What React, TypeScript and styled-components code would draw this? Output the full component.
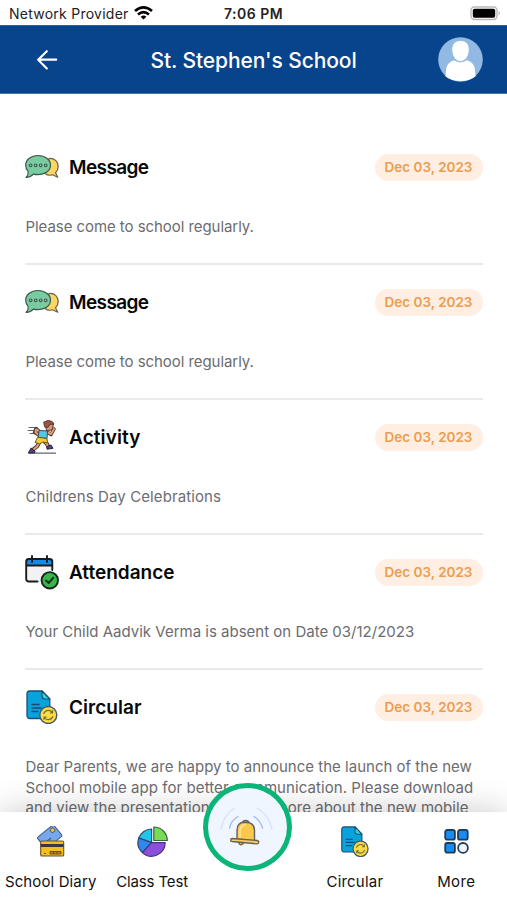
import React from 'react';
import styled, { createGlobalStyle } from 'styled-components';

const GlobalStyle = createGlobalStyle`
  * { box-sizing: border-box; }
  body { margin: 0; background: #fff; font-family: Inter, 'Open Sans', sans-serif; }
  svg { display: block; flex: none; }
`;

const Screen = styled.div`
  width: 507px;
  height: 900px;
  display: flex;
  flex-direction: column;
  overflow: hidden;
  background: #fff;
`;

const StatusBar = styled.div`
  height: 25px;
  flex: none;
  display: grid;
  grid-template-columns: 1fr auto 1fr;
  align-items: center;
  padding: 1px 6px 0 9px;
  font-size: 14px;
  color: #222;
`;

const Carrier = styled.div`
  display: flex;
  align-items: center;
  gap: 5px;
  letter-spacing: 0.25px;
  white-space: nowrap;
`;

const Clock = styled.div`
  font-weight: 600;
  letter-spacing: 0.5px;
  margin-left: -3px;
`;

const BatterySlot = styled.div`
  display: flex;
  justify-content: flex-end;
`;

const Header = styled.header`
  height: 69px;
  flex: none;
  display: grid;
  grid-template-columns: 94px 1fr 94px;
  align-items: center;
  justify-items: center;
  background: #08448c;
  border-top: 1px solid #2d609d;
  border-bottom: 1px solid #4773a9;
`;

const SchoolName = styled.h1`
  margin: 2px 0 0;
  color: #fff;
  font-size: 21px;
  font-weight: 500;
  letter-spacing: -0.1px;
  white-space: nowrap;
`;

const Feed = styled.main`
  flex: 1;
  min-height: 0;
  overflow: hidden;
  padding: 36px 24.5px 0 25px;
`;

const Notice = styled.article`
  height: 135px;
  padding-top: 20px;
  border-bottom: 2px solid #e9e9ea;

  &:last-child {
    border-bottom: 0;
  }
`;

const NoticeHead = styled.div`
  height: 34px;
  display: flex;
  align-items: center;
`;

const NoticeTitle = styled.h2<{ $spacing: number }>`
  margin: 0 auto 0 10px;
  font-size: 19px;
  font-weight: 600;
  letter-spacing: ${(p) => p.$spacing}px;
  color: #080808;
`;

const DatePill = styled.time`
  width: 108px;
  height: 27px;
  border-radius: 14px;
  display: flex;
  align-items: center;
  justify-content: center;
  background: #ffeee1;
  color: #eb9d50;
  font-size: 13.5px;
  font-weight: 600;
  letter-spacing: 0;
  white-space: nowrap;
`;

const NoticeBody = styled.div`
  margin: 33px 0 0 0.5px;
  font-size: 15px;
  line-height: 20.7px;
  color: #6c6c70;
  white-space: nowrap;
`;

const BodyLine = styled.div<{ $spacing: number }>`
  letter-spacing: ${(p) => p.$spacing}px;
`;

const TabBar = styled.nav`
  position: relative;
  z-index: 1;
  height: 88px;
  flex: none;
  display: grid;
  grid-template-columns: repeat(5, 1fr);
  background: #fff;
  box-shadow: 0 0 34px rgba(0, 0, 0, 0.22);
`;

const Tab = styled.div`
  display: flex;
  flex-direction: column;
  align-items: center;
  padding-top: 14px;
`;

const TabLabel = styled.span<{ $spacing: number }>`
  margin-top: 15px;
  font-size: 15px;
  line-height: 20px;
  letter-spacing: ${(p) => p.$spacing}px;
  color: #111;
  white-space: nowrap;
`;

const BellButton = styled.div`
  position: absolute;
  left: 203px;
  top: -29px;
  width: 89px;
  height: 88px;
  border: 5px solid #0cb577;
  border-radius: 50%;
  background: #f0f6ff;
  display: flex;
  align-items: center;
  justify-content: center;
  padding-right: 3px;
`;

const WifiIcon = () => (
  <svg width="19" height="14" viewBox="0 0 19 14" fill="none" stroke="#000" strokeWidth="2.7">
    <path d="M1 5 Q9.5 -2.2 18 5" />
    <path d="M4 8.5 Q9.5 3.9 15 8.5" />
    <path d="M9.5 13.6 L6.6 10.7 Q9.5 8.5 12.4 10.7Z" fill="#000" stroke="none" />
  </svg>
);

const BatteryIcon = () => (
  <svg width="31" height="15" viewBox="0 0 31 15">
    <rect x="1" y="1" width="26" height="12.5" rx="3.5" fill="#fff" stroke="#b9b9b9" strokeWidth="1.4" />
    <rect x="2.8" y="2.8" width="22.4" height="9" rx="1.8" fill="#000" />
    <path d="M28.6 5 Q31 7.2 28.6 9.4Z" fill="#aaa" />
  </svg>
);

const BackIcon = () => (
  <svg width="22" height="22" viewBox="0 0 22 22" fill="none" stroke="#fff" strokeWidth="2.2" strokeLinecap="round" strokeLinejoin="round">
    <path d="M20.200 10.700H2.200M10.800 2.200 2.200 10.700l8.600 8.700" />
  </svg>
);

const Avatar = () => (
  <svg width="45" height="45" viewBox="0 0 45 45">
    <circle cx="22.500" cy="22.500" r="22.300" fill="#91b9e2" />
    <path d="M7.500 39.500 L8.300 31 Q9.500 25.500 16 23.300 Q22.500 27.500 29 23.300 Q35.500 25.500 36.700 31 L37.500 39.500 Q31 44 22.500 44 Q14 44 7.500 39.500Z" fill="#fff" />
    <path d="M22.500 3.500 C29 3.500 31.500 8 31.200 13.500 C30.800 20 27 24.600 22.500 24.600 C18 24.600 14.200 20 13.800 13.500 C13.500 8 16 3.500 22.500 3.500Z" fill="#fff" stroke="#91b9e2" strokeWidth="1" />
  </svg>
);

const MessageIcon = () => (
  <svg width="34" height="34" viewBox="0 0 34 34" stroke="#3f5850" strokeWidth="1.200" strokeLinejoin="round">
    <path d="M24 8.500 C30 8 33.200 12 33.200 16.500 C33.200 19 32 21.300 30.500 22.700 L32.800 27.200 L27.500 24.800 C25 25.600 22 25 20 23.500Z" fill="#fdd565" stroke="#6b5f43" />
    <path d="M13 5.500 C20 5.500 25.500 9.700 25.500 15.300 C25.500 21 20 24.600 13 24.600 Q10.500 24.600 8.300 24.100 C6.500 26.300 4 27.200 1 27.500 Q3.600 25 3.200 21.600 C1.600 20 .7 18 .7 15.300 C.7 9.700 6 5.500 13 5.500Z" fill="#79cca0" />
    <g fill="#b5e2ca" strokeWidth="1.200">
      <circle cx="5.700" cy="15.300" r="1.300" /><circle cx="10.700" cy="15.300" r="1.300" />
      <circle cx="15.700" cy="15.300" r="1.300" /><circle cx="20.700" cy="15.300" r="1.300" />
    </g>
  </svg>
);

const ActivityIcon = () => (
  <svg width="34" height="34" viewBox="0 0 34 34" strokeLinecap="round" strokeLinejoin="round">
    <path d="M4 7.500H12M3 10.500H11M5 13.500H11M4 33.200H30.500" stroke="#65666a" strokeWidth="1.200" />
    <path d="M14 23 L12 26.500 L7.500 30" fill="none" stroke="#493333" strokeWidth="4" />
    <path d="M14 23 L12 26.500 L8 30" fill="none" stroke="#d9a17e" strokeWidth="2.300" />
    <path d="M20 22 L22 24 L23.500 27" fill="none" stroke="#493333" strokeWidth="4" />
    <path d="M20 22 L22 24 L23 27" fill="none" stroke="#d9a17e" strokeWidth="2.300" />
    <path d="M6 28.500 L10 31 L9.500 33 H3.500 Q4 31 6 28.500Z M22 26.500 L26 25 L28 28.300 L22.500 29.200Z" fill="#51418e" stroke="#2c263b" />
    <path d="M14 11 L11 8.500 L9.500 12.500 L14 15 M22 12 L26 14.500 L29 9" fill="none" stroke="#53372f" strokeWidth="3.500" />
    <path d="M14 11 L11 9.500 L10.500 12.500 L14 15 M22 12 L26 14 L29 9" fill="none" stroke="#dba27b" strokeWidth="2" />
    <path d="M14.500 10.500 L22.500 11 L22 18.500 L13.500 17.500Z" fill="#54c8df" stroke="#34545c" />
    <path d="M13 17.300 L22 18.500 L22.500 23 L18 22 L14.500 24 L10.500 22.500Z" fill="#f5cf24" stroke="#67542b" />
    <path d="M20 3 Q25 0 28.500 4 L27 10 L22 10.500Z" fill="#d99b78" stroke="#583730" />
    <path d="M19 2 L23 .6 Q28 .6 29 4 L25 4.500 L23 7.500 L20 7Z" fill="#985343" stroke="#63382f" />
  </svg>
);

const AttendanceIcon = () => (
  <svg width="34" height="35" viewBox="0 0 34 35" strokeLinecap="round" strokeLinejoin="round">
    <path d="M1.500 10H28V27H1.500Z" fill="#f2f2f3" />
    <path d="M1.200 10.500 V6.500 Q1.200 4 4 4 H24.500 Q27.300 4 27.300 6.500 V10.500Z" fill="#168be5" />
    <path d="M1.200 10.500 V6.500 Q1.200 4 4 4 H24.500 Q27.300 4 27.300 6.500 V15 M1.200 10.500H27.300 M1.200 10V24 Q1.200 26.500 4 26.500 H12.500" fill="none" stroke="#171b20" strokeWidth="1.900" />
    <path d="M7 1V7M22 1V7" stroke="#151a20" strokeWidth="1.900" />
    <circle cx="24.800" cy="25.300" r="8.200" fill="#39b64b" stroke="#17251d" strokeWidth="1.900" />
    <path d="M21 25.500 L23.700 28 L28.300 22.700" fill="none" stroke="#15301b" strokeWidth="2" />
  </svg>
);

const CircularIcon = ({ width, height }: { width: number; height: number }) => (
  <svg width={width} height={height} viewBox="0 0 34 34" preserveAspectRatio="none" strokeLinecap="round" strokeLinejoin="round">
    <path d="M4.500 1 H17 L24.800 9 V24 Q24.800 28.500 21 28.500 H5 Q2 28.500 2 25.500 V4 Q2 1 4.500 1Z" fill="#0aa2dc" stroke="#174f76" strokeWidth="1.300" />
    <path d="M17 1 V6 Q17 9 20 9 H24.800Z" fill="#35d4dc" stroke="#17506d" strokeWidth="1.200" />
    <path d="M7 14.500H14M7 18H16M7 21.500H13" stroke="#164b75" strokeWidth="1.300" />
    <circle cx="23.300" cy="25" r="8.500" fill="#fbdc47" stroke="#485866" strokeWidth="1.400" />
    <path d="M18.800 23.500 Q20 20.300 23.300 20.300 Q26 20.300 27.500 22.500 M27.600 20.700 V22.800 H25.500 M27.800 26.500 Q26.500 29.700 23.300 29.700 Q20.500 29.700 19 27.500 M19 29.300V27.200H21.100" fill="none" stroke="#786f37" strokeWidth="1.200" />
  </svg>
);

const DiaryIcon = () => (
  <svg width="31" height="31" viewBox="0 0 31 31" strokeLinejoin="round">
    <g transform="rotate(-39 14 11)">
      <rect x="4.200" y="4" width="21" height="14.500" rx="1.500" fill="#76a8ee" stroke="#415c82" />
      <path d="M7 13H15M7 15.500H12" stroke="#365f9e" strokeWidth="1.200" />
      <rect x="19" y="6" width="4" height="4" rx="1" fill="#efc94e" stroke="#5c5b4e" />
    </g>
    <rect x="5.700" y="15" width="23" height="15" rx="1.300" fill="#f4bd22" stroke="#6d5227" strokeWidth="1.100" />
    <path d="M5.700 18H28.700V21H5.700Z" fill="#3b3a39" />
    <path d="M9 27.500H11M15 25.500H26V28H15Z M18.500 25.500V28M22 25.500V28" fill="#b8872b" stroke="#714d29" />
  </svg>
);

const PieIcon = () => (
  <svg width="31" height="31" viewBox="0 0 31 31" stroke="#304368" strokeWidth="1.200" strokeLinejoin="round">
    <path d="M14.600 16.600 V3 A13.600 13.600 0 0 0 1.800 12Z" fill="#20c5ee" />
    <path d="M14.600 16.600 L1.800 12 A13.600 13.600 0 0 0 5.400 26.600Z" fill="#3187ee" />
    <path d="M14.600 16.600 L5.400 26.600 A13.600 13.600 0 0 0 28.200 16.600Z" fill="#8b4fda" stroke="#4a347d" />
    <path d="M16.800 1 A13.500 13.500 0 0 1 30.300 14.500 H16.800Z" fill="#77dc54" stroke="#3b6447" />
  </svg>
);

const MoreIcon = () => (
  <svg width="31" height="31" viewBox="0 0 31 31" fill="#168cf5" stroke="#203c59" strokeWidth="1.800">
    <rect x="4.200" y="4" width="9.700" height="9.700" rx="2" />
    <rect x="17" y="4" width="9.700" height="9.700" rx="2" />
    <rect x="4.200" y="17" width="9.700" height="9.700" rx="2" />
    <circle cx="22" cy="21.900" r="4.900" fill="#f3f6ff" />
  </svg>
);

const BellIcon = () => (
  <svg width="56" height="44" viewBox="0 0 56 44" strokeLinecap="round" strokeLinejoin="round">
    <path d="M3 24 Q6 9 17 3 M39 3 Q50 9 54 24" fill="none" stroke="#d5e0fb" strokeWidth="1.300" />
    <path d="M11.500 23 Q13 15.500 20 11.500 M36 11.500 Q42.500 15.500 44.500 23" fill="none" stroke="#9bb9f6" strokeWidth="1.400" />
    <path d="M20.500 37.500 Q22.500 42 25.500 38" fill="#eebb43" stroke="#696252" strokeWidth="1.300" />
    <path d="M24.500 18 Q25 15.500 27.500 15.500 Q30.500 15.500 31 18" fill="#e5af3b" stroke="#5e6169" strokeWidth="1.500" />
    <path d="M19 34 V25 Q19.500 17.500 26 17.300 L29.500 17.500 Q36 18 36.500 25 V36Z" fill="#fac84b" stroke="#636269" strokeWidth="1.400" />
    <path d="M22 32 Q20.500 21 27 19.500" fill="none" stroke="#ffe28b" strokeWidth="2" />
    <path d="M14 33.500 L39 35.500 Q41 35.800 40.700 37.500 Q40.300 39 38.500 38.800 L14 36.500 Q12.500 36.300 12.700 35 Q12.800 33.500 14 33.500Z" fill="#f8cd61" stroke="#696252" strokeWidth="1.300" />
  </svg>
);

type NoticeData = {
  title: string;
  titleSpacing: number;
  icon: React.ReactNode;
  lines: [string, number][];
};

const notices: NoticeData[] = [
  { title: 'Message', titleSpacing: -0.6, icon: <MessageIcon />, lines: [['Please come to school regularly.', -0.06]] },
  { title: 'Message', titleSpacing: -0.6, icon: <MessageIcon />, lines: [['Please come to school regularly.', -0.06]] },
  { title: 'Activity', titleSpacing: 0.1, icon: <ActivityIcon />, lines: [['Childrens Day Celebrations', 0.11]] },
  { title: 'Attendance', titleSpacing: 0, icon: <AttendanceIcon />, lines: [['Your Child Aadvik Verma is absent on Date 03/12/2023', 0]] },
  {
    title: 'Circular', titleSpacing: 0.05, icon: <CircularIcon width={34} height={34} />,
    lines: [
      ['Dear Parents, we are happy to announce the launch of the new', 0.01],
      ['School mobile app for better communication. Please download', 0.075],
      ['and view the presentation to know more about the new mobile', 0.04],
    ],
  },
];

export default function App() {
  return (
    <Screen>
      <GlobalStyle />
      <StatusBar>
        <Carrier>Network Provider <WifiIcon /></Carrier>
        <Clock>7:06 PM</Clock>
        <BatterySlot><BatteryIcon /></BatterySlot>
      </StatusBar>
      <Header>
        <BackIcon />
        <SchoolName>St. Stephen's School</SchoolName>
        <Avatar />
      </Header>
      <Feed>
        {notices.map((n, i) => (
          <Notice key={i}>
            <NoticeHead>
              {n.icon}
              <NoticeTitle $spacing={n.titleSpacing}>{n.title}</NoticeTitle>
              <DatePill>Dec 03, 2023</DatePill>
            </NoticeHead>
            <NoticeBody>
              {n.lines.map(([text, spacing]) => (
                <BodyLine key={text} $spacing={spacing}>{text}</BodyLine>
              ))}
            </NoticeBody>
          </Notice>
        ))}
      </Feed>
      <TabBar>
        <Tab><DiaryIcon /><TabLabel $spacing={0.12}>School Diary</TabLabel></Tab>
        <Tab><PieIcon /><TabLabel $spacing={-0.15}>Class Test</TabLabel></Tab>
        <Tab><BellButton><BellIcon /></BellButton></Tab>
        <Tab><CircularIcon width={30} height={31} /><TabLabel $spacing={0.2}>Circular</TabLabel></Tab>
        <Tab><MoreIcon /><TabLabel $spacing={0.4}>More</TabLabel></Tab>
      </TabBar>
    </Screen>
  );
}
